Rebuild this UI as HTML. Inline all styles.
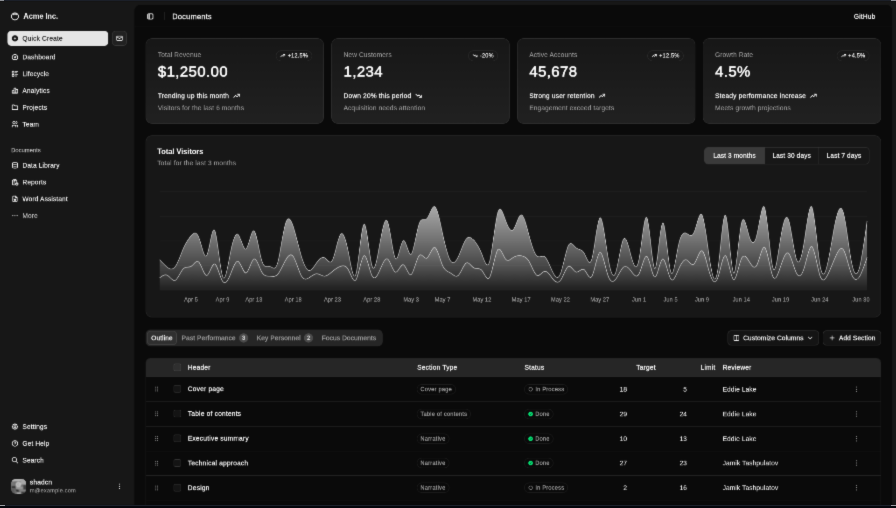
<!DOCTYPE html>
<html><head><meta charset="utf-8"><title>Dashboard</title><style>
*{box-sizing:border-box;margin:0;padding:0}
html,body{width:896px;height:508px;overflow:hidden;background:#171717;}
body{font-family:"Liberation Sans",sans-serif;color:#fafafa;-webkit-text-stroke:0.12px currentColor;position:relative;-webkit-font-smoothing:antialiased}
#root{position:absolute;left:0;top:0.6px;width:1920px;height:1080px;transform:scale(0.466667);transform-origin:0 0;will-change:transform;font-size:14px;line-height:20px;background:#171717}
.abs{position:absolute}
.ic{display:block;flex:none}
.row{display:flex;align-items:center}
.mi{position:absolute;left:16px;width:256px;height:32px;display:flex;align-items:center;gap:8px;padding:0 8px;font-size:14px;white-space:nowrap;letter-spacing:0.3px;-webkit-text-stroke:0.25px currentColor}
.muted{color:#a1a1a1;letter-spacing:0.28px}
.card{position:absolute;background:#171717;border:1px solid rgba(255,255,255,0.10);border-radius:14px;box-shadow:0 1px 2px rgba(0,0,0,.05)}
.badge{position:absolute;display:flex;align-items:center;gap:4px;height:22px;padding:0 8px;border:1px solid rgba(255,255,255,0.10);border-radius:11.5px;font-size:12px;-webkit-text-stroke:0.3px currentColor;letter-spacing:0.42px;white-space:nowrap;line-height:16px}
.t{position:absolute;white-space:nowrap}
.b{-webkit-text-stroke:0.45px currentColor;letter-spacing:0.45px}
.sb{font-weight:700}
.tr{position:absolute;left:0;width:100%;border-bottom:1px solid rgba(255,255,255,0.10)}
.pill{position:absolute;display:flex;align-items:center;gap:4px;height:22px;padding:0 7px;border:1px solid rgba(255,255,255,0.10);border-radius:11px;font-size:12px;-webkit-text-stroke:0.4px currentColor;letter-spacing:0.55px;color:#a1a1a1;white-space:nowrap;line-height:16px}
.cb{position:absolute;width:16px;height:16px;border:1px solid rgba(255,255,255,0.15);border-radius:4px;background:rgba(255,255,255,0.045)}
</style></head>
<body><svg width="0" height="0" style="position:absolute"><defs><filter id="soft" x="0" y="0" width="100%" height="100%" color-interpolation-filters="sRGB"><feConvolveMatrix order="3" kernelMatrix="0.0114 0.084 0.0114 0.084 0.618 0.084 0.0114 0.084 0.0114" divisor="1" edgeMode="duplicate" preserveAlpha="true"/></filter></defs></svg>
<div id="wrap" style="position:absolute;left:0;top:0;width:896px;height:508px;overflow:hidden;filter:url(#soft)"><div id="root">
<div class="mi sb" style="top:16.5px;font-size:16px;padding:0 6px;letter-spacing:-0.15px;-webkit-text-stroke:0"><svg class="ic" style="width:20px;height:20px;" viewBox="0 0 24 24" fill="none" stroke="currentColor" stroke-width="2.2" stroke-linecap="round" stroke-linejoin="round"><path d="M5.636 5.636a9 9 0 1 0 12.728 12.728a9 9 0 0 0 -12.728 -12.728z"/><path d="M16.243 7.757a6 6 0 0 0 -8.486 0"/></svg><span>Acme Inc.</span></div>
<div class="abs row" style="left:16px;top:64px;width:216px;height:32px;background:#e5e5e5;color:#171717;border-radius:8px;padding:0 8px;gap:8px;white-space:nowrap;letter-spacing:0.4px;-webkit-text-stroke:0.25px currentColor"><svg class="ic" style="width:16px;height:16px;" viewBox="0 0 24 24" fill="none" stroke="currentColor" stroke-width="2" stroke-linecap="round" stroke-linejoin="round"><path stroke="none" fill="currentColor" d="M4.929 4.929a10 10 0 1 1 14.141 14.141a10 10 0 0 1 -14.14 -14.14zm8.071 4.071a1 1 0 1 0 -2 0v2h-2a1 1 0 1 0 0 2h2v2a1 1 0 1 0 2 0v-2h2a1 1 0 1 0 0 -2h-2v-2z"/></svg><span>Quick Create</span></div>
<div class="abs row" style="left:240px;top:64px;width:32px;height:32px;border:1px solid rgba(255,255,255,0.15);background:rgba(255,255,255,0.045);border-radius:8px;justify-content:center"><svg class="ic" style="width:16px;height:16px;" viewBox="0 0 24 24" fill="none" stroke="currentColor" stroke-width="2" stroke-linecap="round" stroke-linejoin="round"><path d="M3 7a2 2 0 0 1 2 -2h14a2 2 0 0 1 2 2v10a2 2 0 0 1 -2 2h-14a2 2 0 0 1 -2 -2v-10z"/><path d="M3 7l9 6l9 -6"/></svg></div>
<div class="mi" style="top:104px"><svg class="ic" style="width:16px;height:16px;" viewBox="0 0 24 24" fill="none" stroke="currentColor" stroke-width="2.4" stroke-linecap="round" stroke-linejoin="round"><path d="M12 13m-2 0a2 2 0 1 0 4 0a2 2 0 1 0 -4 0"/><path d="M13.45 11.55l2.05 -2.05"/><path d="M6.4 20a9 9 0 1 1 11.2 0z"/></svg><span>Dashboard</span></div>
<div class="mi" style="top:140px"><svg class="ic" style="width:16px;height:16px;" viewBox="0 0 24 24" fill="none" stroke="currentColor" stroke-width="2.4" stroke-linecap="round" stroke-linejoin="round"><path d="M13 5h8"/><path d="M13 9h5"/><path d="M13 15h8"/><path d="M13 19h5"/><path d="M3 5a1 1 0 0 1 1 -1h4a1 1 0 0 1 1 1v4a1 1 0 0 1 -1 1h-4a1 1 0 0 1 -1 -1z"/><path d="M3 15a1 1 0 0 1 1 -1h4a1 1 0 0 1 1 1v4a1 1 0 0 1 -1 1h-4a1 1 0 0 1 -1 -1z"/></svg><span>Lifecycle</span></div>
<div class="mi" style="top:176px"><svg class="ic" style="width:16px;height:16px;" viewBox="0 0 24 24" fill="none" stroke="currentColor" stroke-width="2.4" stroke-linecap="round" stroke-linejoin="round"><path d="M3 13a1 1 0 0 1 1 -1h4a1 1 0 0 1 1 1v6a1 1 0 0 1 -1 1h-4a1 1 0 0 1 -1 -1z"/><path d="M15 9a1 1 0 0 1 1 -1h4a1 1 0 0 1 1 1v10a1 1 0 0 1 -1 1h-4a1 1 0 0 1 -1 -1z"/><path d="M9 5a1 1 0 0 1 1 -1h4a1 1 0 0 1 1 1v14a1 1 0 0 1 -1 1h-4a1 1 0 0 1 -1 -1z"/><path d="M4 20h14"/></svg><span>Analytics</span></div>
<div class="mi" style="top:212px"><svg class="ic" style="width:16px;height:16px;" viewBox="0 0 24 24" fill="none" stroke="currentColor" stroke-width="2.4" stroke-linecap="round" stroke-linejoin="round"><path d="M5 4h4l3 3h7a2 2 0 0 1 2 2v8a2 2 0 0 1 -2 2h-14a2 2 0 0 1 -2 -2v-11a2 2 0 0 1 2 -2"/></svg><span>Projects</span></div>
<div class="mi" style="top:248px"><svg class="ic" style="width:16px;height:16px;" viewBox="0 0 24 24" fill="none" stroke="currentColor" stroke-width="2.4" stroke-linecap="round" stroke-linejoin="round"><path d="M5 7a4 4 0 1 0 8 0a4 4 0 1 0 -8 0"/><path d="M3 21v-2a4 4 0 0 1 4 -4h4a4 4 0 0 1 4 4v2"/><path d="M16 3.13a4 4 0 0 1 0 7.75"/><path d="M21 21v-2a4 4 0 0 0 -3 -3.85"/></svg><span>Team</span></div>
<div class="t" style="left:24px;top:304px;height:32px;line-height:32px;font-size:12px;-webkit-text-stroke:0.25px currentColor;letter-spacing:0.3px;color:rgba(250,250,250,.7)">Documents</div>
<div class="mi" style="top:336px"><svg class="ic" style="width:16px;height:16px;" viewBox="0 0 24 24" fill="none" stroke="currentColor" stroke-width="2.4" stroke-linecap="round" stroke-linejoin="round"><path d="M4 6a8 3 0 1 0 16 0a8 3 0 1 0 -16 0"/><path d="M4 6v6a8 3 0 0 0 16 0v-6"/><path d="M4 12v6a8 3 0 0 0 16 0v-6"/></svg><span>Data Library</span></div>
<div class="mi" style="top:372px"><svg class="ic" style="width:16px;height:16px;" viewBox="0 0 24 24" fill="none" stroke="currentColor" stroke-width="2.4" stroke-linecap="round" stroke-linejoin="round"><path d="M8 5h-2a2 2 0 0 0 -2 2v12a2 2 0 0 0 2 2h5.697"/><path d="M18 14v4h4"/><path d="M18 11v-4a2 2 0 0 0 -2 -2h-2"/><path d="M8 5a2 2 0 0 1 2 -2h2a2 2 0 0 1 2 2v0a2 2 0 0 1 -2 2h-2a2 2 0 0 1 -2 -2z"/><path d="M14 18a4 4 0 1 0 8 0a4 4 0 1 0 -8 0"/><path d="M8 11h4"/><path d="M8 15h3"/></svg><span>Reports</span></div>
<div class="mi" style="top:408px"><svg class="ic" style="width:16px;height:16px;" viewBox="0 0 24 24" fill="none" stroke="currentColor" stroke-width="2.4" stroke-linecap="round" stroke-linejoin="round"><path d="M14 3v4a1 1 0 0 0 1 1h4"/><path d="M17 21h-10a2 2 0 0 1 -2 -2v-14a2 2 0 0 1 2 -2h7l5 5v11a2 2 0 0 1 -2 2z"/><path d="M9 12l1.333 5l1.667 -4l1.667 4l1.333 -5"/></svg><span>Word Assistant</span></div>
<div class="mi" style="top:444px;color:rgba(250,250,250,.7)"><svg class="ic" style="width:16px;height:16px;color:rgba(250,250,250,.7)" viewBox="0 0 24 24" fill="none" stroke="currentColor" stroke-width="2" stroke-linecap="round" stroke-linejoin="round"><path d="M4 12a1 1 0 1 0 2 0a1 1 0 1 0 -2 0"/><path d="M11 12a1 1 0 1 0 2 0a1 1 0 1 0 -2 0"/><path d="M18 12a1 1 0 1 0 2 0a1 1 0 1 0 -2 0"/></svg><span>More</span></div>
<div class="mi" style="top:896px"><svg class="ic" style="width:16px;height:16px;" viewBox="0 0 24 24" fill="none" stroke="currentColor" stroke-width="2.4" stroke-linecap="round" stroke-linejoin="round"><path d="M10.325 4.317c.426 -1.756 2.924 -1.756 3.35 0a1.724 1.724 0 0 0 2.573 1.066c1.543 -.94 3.31 .826 2.37 2.37a1.724 1.724 0 0 0 1.065 2.572c1.756 .426 1.756 2.924 0 3.35a1.724 1.724 0 0 0 -1.066 2.573c.94 1.543 -.826 3.31 -2.37 2.37a1.724 1.724 0 0 0 -2.572 1.065c-.426 1.756 -2.924 1.756 -3.35 0a1.724 1.724 0 0 0 -2.573 -1.066c-1.543 .94 -3.31 -.826 -2.37 -2.37a1.724 1.724 0 0 0 -1.065 -2.572c-1.756 -.426 -1.756 -2.924 0 -3.35a1.724 1.724 0 0 0 1.066 -2.573c-.94 -1.543 .826 -3.31 2.37 -2.37c1 .608 2.296 .07 2.572 -1.065z"/><path d="M9 12a3 3 0 1 0 6 0a3 3 0 0 0 -6 0"/></svg><span>Settings</span></div>
<div class="mi" style="top:932px"><svg class="ic" style="width:16px;height:16px;" viewBox="0 0 24 24" fill="none" stroke="currentColor" stroke-width="2.4" stroke-linecap="round" stroke-linejoin="round"><path d="M3 12a9 9 0 1 0 18 0a9 9 0 1 0 -18 0"/><path d="M12 17l0 .01"/><path d="M12 13.5a1.5 1.5 0 0 1 1 -1.5a2.6 2.6 0 1 0 -3 -4"/></svg><span>Get Help</span></div>
<div class="mi" style="top:968px"><svg class="ic" style="width:16px;height:16px;" viewBox="0 0 24 24" fill="none" stroke="currentColor" stroke-width="2.4" stroke-linecap="round" stroke-linejoin="round"><path d="M3 10a7 7 0 1 0 14 0a7 7 0 1 0 -14 0"/><path d="M21 21l-6 -6"/></svg><span>Search</span></div>
<div class="abs row" style="left:16px;top:1016px;width:256px;height:48px;padding:0 8px;gap:8px">
<svg class="ic" style="width:32px;height:32px;border-radius:9px" viewBox="0 0 32 32"><defs><filter id="bl" x="-20%" y="-20%" width="140%" height="140%"><feGaussianBlur stdDeviation="1.1"/></filter><clipPath id="avc"><rect width="32" height="32" rx="9"/></clipPath></defs><g clip-path="url(#avc)"><rect width="32" height="32" fill="#6f6f6f"/><g filter="url(#bl)"><rect x="-2" y="-2" width="36" height="7" fill="#b4b4b4"/><rect x="20" y="0" width="14" height="12" fill="#a8a8a8"/><rect x="-2" y="5" width="8" height="10" fill="#767676"/><circle cx="15.5" cy="12" r="6" fill="#c4c4c4"/><circle cx="15.5" cy="12" r="2.6" fill="#8a8a8a"/><ellipse cx="16" cy="12" rx="1.6" ry="1.2" fill="#d8d8d8"/><rect x="1" y="15.5" width="8" height="4" fill="#2c2c2c"/><path d="M7 17 L12 19 L20 31 L13 31 Z" fill="#303030"/><rect x="-2" y="21" width="9" height="11" fill="#5c5c5c"/><rect x="26" y="13" width="8" height="11" fill="#3c3c3c"/><rect x="10" y="17" width="15" height="5" fill="#9c9c9c"/><rect x="18" y="23" width="13" height="4" fill="#858585"/><rect x="20" y="27.5" width="14" height="6" fill="#3a3a3a"/><rect x="12" y="28.5" width="9" height="5" fill="#a8a8a8"/></g></g></svg>
<div style="flex:1;line-height:17.5px"><div class="b" style="font-size:14px">shadcn</div><div style="font-size:12px;color:#a1a1a1;line-height:16px;letter-spacing:0.4px">m@example.com</div></div>
<svg class="ic" style="width:16px;height:16px;" viewBox="0 0 24 24" fill="none" stroke="currentColor" stroke-width="2" stroke-linecap="round" stroke-linejoin="round"><circle cx="12" cy="5" r="1.7" fill="currentColor" stroke="none"/><circle cx="12" cy="12" r="1.7" fill="currentColor" stroke="none"/><circle cx="12" cy="19" r="1.7" fill="currentColor" stroke="none"/></svg></div>
<div class="abs" style="left:288px;top:8px;width:1624px;height:1100px;background:#0a0a0a;border-radius:14px;box-shadow:0 1px 3px rgba(0,0,0,.1)"></div>
<div class="abs" style="left:288px;top:55px;width:1624px;height:1px;background:rgba(255,255,255,0.10)"></div>
<div class="abs" style="left:314px;top:25px"><svg class="ic" style="width:16px;height:16px;" viewBox="0 0 24 24" fill="none" stroke="currentColor" stroke-width="2" stroke-linecap="round" stroke-linejoin="round"><rect width="17" height="17" x="3.5" y="3.5" rx="3.5" stroke-width="2.6"/><path d="M4.5 5h5v14h-5z" fill="currentColor" stroke="none" opacity=".5"/><path d="M10 4v16" stroke-width="1.6"/></svg></div>
<div class="abs" style="left:352px;top:24px;width:1px;height:16px;background:rgba(255,255,255,0.10)"></div>
<div class="t b" style="left:369px;top:21.5px;font-size:16px;line-height:24px">Documents</div>
<div class="t b" style="right:44px;top:23px;font-size:14px">GitHub</div>
<div class="card" style="left:312px;top:80px;width:382px;height:183px;background:linear-gradient(to top,#212121,#171717)"><div class="t muted" style="left:25.2px;top:24px">Total Revenue</div><div class="t" style="left:25.2px;top:52.3px;font-size:32px;line-height:36px;letter-spacing:0.9px;-webkit-text-stroke:1.15px currentColor">$1,250.00</div><div class="badge" style="right:24px;top:25.2px;height:22.6px"><svg class="ic" style="width:12px;height:12px;" viewBox="0 0 24 24" fill="none" stroke="currentColor" stroke-width="2.5" stroke-linecap="round" stroke-linejoin="round"><path d="M3 17l6 -6l4 4l8 -8"/><path d="M14 7l7 0l0 7"/></svg><span>+12.5%</span></div><div class="t b row" style="left:25.2px;top:112px;gap:8px"><span>Trending up this month</span><svg class="ic" style="width:16px;height:16px;" viewBox="0 0 24 24" fill="none" stroke="currentColor" stroke-width="2.4" stroke-linecap="round" stroke-linejoin="round"><path d="M3 17l6 -6l4 4l8 -8"/><path d="M14 7l7 0l0 7"/></svg></div><div class="t muted" style="left:25.2px;top:138.2px">Visitors for the last 6 months</div></div>
<div class="card" style="left:710px;top:80px;width:382px;height:183px;background:linear-gradient(to top,#212121,#171717)"><div class="t muted" style="left:25.2px;top:24px">New Customers</div><div class="t" style="left:25.2px;top:52.3px;font-size:32px;line-height:36px;letter-spacing:0.9px;-webkit-text-stroke:1.15px currentColor">1,234</div><div class="badge" style="right:24px;top:25.2px;height:22.6px"><svg class="ic" style="width:12px;height:12px;" viewBox="0 0 24 24" fill="none" stroke="currentColor" stroke-width="2.5" stroke-linecap="round" stroke-linejoin="round"><path d="M3 7l6 6l4 -4l8 8"/><path d="M21 10l0 7l-7 0"/></svg><span>-20%</span></div><div class="t b row" style="left:25.2px;top:112px;gap:8px"><span>Down 20% this period</span><svg class="ic" style="width:16px;height:16px;" viewBox="0 0 24 24" fill="none" stroke="currentColor" stroke-width="2.4" stroke-linecap="round" stroke-linejoin="round"><path d="M3 7l6 6l4 -4l8 8"/><path d="M21 10l0 7l-7 0"/></svg></div><div class="t muted" style="left:25.2px;top:138.2px">Acquisition needs attention</div></div>
<div class="card" style="left:1108px;top:80px;width:382px;height:183px;background:linear-gradient(to top,#212121,#171717)"><div class="t muted" style="left:25.2px;top:24px">Active Accounts</div><div class="t" style="left:25.2px;top:52.3px;font-size:32px;line-height:36px;letter-spacing:0.9px;-webkit-text-stroke:1.15px currentColor">45,678</div><div class="badge" style="right:24px;top:25.2px;height:22.6px"><svg class="ic" style="width:12px;height:12px;" viewBox="0 0 24 24" fill="none" stroke="currentColor" stroke-width="2.5" stroke-linecap="round" stroke-linejoin="round"><path d="M3 17l6 -6l4 4l8 -8"/><path d="M14 7l7 0l0 7"/></svg><span>+12.5%</span></div><div class="t b row" style="left:25.2px;top:112px;gap:8px"><span>Strong user retention</span><svg class="ic" style="width:16px;height:16px;" viewBox="0 0 24 24" fill="none" stroke="currentColor" stroke-width="2.4" stroke-linecap="round" stroke-linejoin="round"><path d="M3 17l6 -6l4 4l8 -8"/><path d="M14 7l7 0l0 7"/></svg></div><div class="t muted" style="left:25.2px;top:138.2px">Engagement exceed targets</div></div>
<div class="card" style="left:1506px;top:80px;width:382px;height:183px;background:linear-gradient(to top,#212121,#171717)"><div class="t muted" style="left:25.2px;top:24px">Growth Rate</div><div class="t" style="left:25.2px;top:52.3px;font-size:32px;line-height:36px;letter-spacing:0.9px;-webkit-text-stroke:1.15px currentColor">4.5%</div><div class="badge" style="right:24px;top:25.2px;height:22.6px"><svg class="ic" style="width:12px;height:12px;" viewBox="0 0 24 24" fill="none" stroke="currentColor" stroke-width="2.5" stroke-linecap="round" stroke-linejoin="round"><path d="M3 17l6 -6l4 4l8 -8"/><path d="M14 7l7 0l0 7"/></svg><span>+4.5%</span></div><div class="t b row" style="left:25.2px;top:112px;gap:8px"><span>Steady performance increase</span><svg class="ic" style="width:16px;height:16px;" viewBox="0 0 24 24" fill="none" stroke="currentColor" stroke-width="2.4" stroke-linecap="round" stroke-linejoin="round"><path d="M3 17l6 -6l4 4l8 -8"/><path d="M14 7l7 0l0 7"/></svg></div><div class="t muted" style="left:25.2px;top:138.2px">Meets growth projections</div></div>
<div class="card" style="left:312px;top:288px;width:1576px;height:390px">
<div class="t sb" style="left:24px;top:25.5px;font-size:16px;line-height:16px;letter-spacing:-0.1px">Total Visitors</div>
<div class="t muted" style="left:24px;top:48px;letter-spacing:0.32px">Total for the last 3 months</div>
<div class="abs row" style="right:24px;top:23.5px;height:37px;border:1px solid rgba(255,255,255,0.15);border-radius:8px;-webkit-text-stroke:0.45px currentColor;letter-spacing:0.25px;white-space:nowrap;overflow:hidden"><div class="row" style="height:100%;width:128px;justify-content:center;background:#3a3a3a">Last 3 months</div><div class="row" style="height:100%;width:116px;justify-content:center;border-left:1px solid rgba(255,255,255,0.15)">Last 30 days</div><div class="row" style="height:100%;width:108px;justify-content:center;border-left:1px solid rgba(255,255,255,0.15)">Last 7 days</div></div>
<svg class="abs" style="left:0;top:0;overflow:visible" width="1574" height="388" viewBox="0 0 1574 388"><defs><linearGradient id="gd" gradientUnits="userSpaceOnUse" x1="0" y1="151.6" x2="0" y2="330.6"><stop offset="5%" stop-color="#e5e5e5" stop-opacity="1"/><stop offset="95%" stop-color="#e5e5e5" stop-opacity="0.1"/></linearGradient><linearGradient id="gm" gradientUnits="userSpaceOnUse" x1="0" y1="237.4" x2="0" y2="330.6"><stop offset="5%" stop-color="#e5e5e5" stop-opacity="0.8"/><stop offset="95%" stop-color="#e5e5e5" stop-opacity="0.1"/></linearGradient></defs><line x1="29" x2="1545" y1="330.6" y2="330.6" stroke="rgba(255,255,255,0.05)" stroke-width="1"/><line x1="29" x2="1545" y1="277.85" y2="277.85" stroke="rgba(255,255,255,0.05)" stroke-width="1"/><line x1="29" x2="1545" y1="225.10000000000002" y2="225.10000000000002" stroke="rgba(255,255,255,0.05)" stroke-width="1"/><line x1="29" x2="1545" y1="172.35" y2="172.35" stroke="rgba(255,255,255,0.05)" stroke-width="1"/><line x1="29" x2="1545" y1="119.6" y2="119.6" stroke="rgba(255,255,255,0.05)" stroke-width="1"/><path d="M29.0,304.2C34.6,300.1,40.2,295.9,45.8,299.0C51.5,302.0,57.1,312.3,62.7,309.5C68.3,306.7,73.9,290.8,79.5,284.9C85.1,279.0,90.8,283.1,96.4,279.6C102.0,276.1,107.6,264.9,113.2,270.8C118.8,276.8,124.5,299.8,130.1,299.0C135.7,298.1,141.3,273.2,146.9,274.3C152.5,275.4,158.1,302.5,163.8,311.3C169.4,320.1,175.0,310.7,180.6,297.2C186.2,283.7,191.8,266.2,197.4,269.1C203.1,271.9,208.7,295.1,214.3,293.7C219.9,292.3,225.5,266.3,231.1,263.8C236.7,261.2,242.4,282.1,248.0,291.9C253.6,301.7,259.2,300.4,264.8,300.7C270.4,301.1,276.1,303.1,281.7,297.2C287.3,291.3,292.9,277.5,298.5,267.3C304.1,257.1,309.7,250.6,315.4,258.5C321.0,266.4,326.6,288.6,332.2,299.0C337.8,309.3,343.4,307.7,349.0,304.2C354.7,300.8,360.3,295.4,365.9,295.4C371.5,295.5,377.1,300.9,382.7,300.7C388.3,300.6,394.0,294.9,399.6,290.2C405.2,285.5,410.8,281.8,416.4,279.6C422.0,277.4,427.7,276.8,433.3,286.6C438.9,296.5,444.5,317.0,450.1,307.7C455.7,298.5,461.3,259.6,467.0,256.8C472.6,253.9,478.2,287.2,483.8,299.0C489.4,310.7,495.0,301.0,500.6,288.4C506.3,275.8,511.9,260.2,517.5,263.8C523.1,267.4,528.7,290.2,534.3,291.9C539.9,293.7,545.6,274.3,551.2,276.1C556.8,277.8,562.4,300.7,568.0,297.2C573.6,293.7,579.3,263.9,584.9,256.8C590.5,249.6,596.1,265.0,601.7,262.0C607.3,259.0,612.9,237.5,618.6,239.2C624.2,240.8,629.8,265.5,635.4,277.9C641.0,290.2,646.6,290.2,652.2,293.7C657.9,297.2,663.5,304.2,669.1,299.0C674.7,293.7,680.3,276.0,685.9,272.6C691.5,269.2,697.2,280.0,702.8,283.1C708.4,286.3,714.0,281.7,719.6,288.4C725.2,295.1,730.9,312.9,736.5,302.5C742.1,292.0,747.7,253.3,753.3,244.4C758.9,235.6,764.5,256.7,770.2,263.8C775.8,270.9,781.4,264.0,787.0,260.3C792.6,256.6,798.2,256.0,803.8,256.8C809.5,257.5,815.1,259.5,820.7,269.1C826.3,278.7,831.9,295.9,837.5,299.0C843.1,302.0,848.8,290.9,854.4,290.2C860.0,289.4,865.6,299.1,871.2,306.0C876.8,312.9,882.5,317.1,888.1,309.5C893.7,301.9,899.3,282.5,904.9,279.6C910.5,276.8,916.1,290.5,921.8,291.9C927.4,293.3,933.0,282.4,938.6,286.6C944.2,290.9,949.8,310.3,955.4,300.7C961.1,291.1,966.7,252.4,972.3,249.7C977.9,247.0,983.5,280.2,989.1,297.2C994.7,314.1,1000.4,314.8,1006.0,307.7C1011.6,300.7,1017.2,285.8,1022.8,281.4C1028.4,276.9,1034.1,282.8,1039.7,290.2C1045.3,297.5,1050.9,306.3,1056.5,295.4C1062.1,284.6,1067.7,254.2,1073.4,258.5C1079.0,262.8,1084.6,301.8,1090.2,302.5C1095.8,303.1,1101.4,265.4,1107.0,263.8C1112.7,262.2,1118.3,296.7,1123.9,306.0C1129.5,315.3,1135.1,299.5,1140.7,286.6C1146.3,273.8,1152.0,264.0,1157.6,265.5C1163.2,267.1,1168.8,280.1,1174.4,274.3C1180.0,268.5,1185.7,243.9,1191.3,246.2C1196.9,248.5,1202.5,277.8,1208.1,295.4C1213.7,313.1,1219.3,319.2,1225.0,304.2C1230.6,289.2,1236.2,253.1,1241.8,256.8C1247.4,260.4,1253.0,303.6,1258.6,307.7C1264.3,311.8,1269.9,276.8,1275.5,263.8C1281.1,250.8,1286.7,259.9,1292.3,269.1C1297.9,278.2,1303.6,287.3,1309.2,276.1C1314.8,264.9,1320.4,233.4,1326.0,239.2C1331.6,244.9,1337.3,287.8,1342.9,300.7C1348.5,313.6,1354.1,296.4,1359.7,279.6C1365.3,262.9,1370.9,246.6,1376.6,251.5C1382.2,256.4,1387.8,282.5,1393.4,293.7C1399.0,304.8,1404.6,301.1,1410.2,283.1C1415.9,265.2,1421.5,233.1,1427.1,237.4C1432.7,241.7,1438.3,282.3,1443.9,299.0C1449.5,315.6,1455.2,308.3,1460.8,297.2C1466.4,286.1,1472.0,271.1,1477.6,258.5C1483.2,245.9,1488.9,235.6,1494.5,244.4C1500.1,253.2,1505.7,281.1,1511.3,295.4C1516.9,309.8,1522.5,310.6,1528.2,302.5C1533.8,294.4,1539.4,277.3,1545.0,260.3L1545.0,330.6L29.0,330.6Z" fill="url(#gm)" fill-opacity="0.6"/><path d="M29.0,304.2C34.6,300.1,40.2,295.9,45.8,299.0C51.5,302.0,57.1,312.3,62.7,309.5C68.3,306.7,73.9,290.8,79.5,284.9C85.1,279.0,90.8,283.1,96.4,279.6C102.0,276.1,107.6,264.9,113.2,270.8C118.8,276.8,124.5,299.8,130.1,299.0C135.7,298.1,141.3,273.2,146.9,274.3C152.5,275.4,158.1,302.5,163.8,311.3C169.4,320.1,175.0,310.7,180.6,297.2C186.2,283.7,191.8,266.2,197.4,269.1C203.1,271.9,208.7,295.1,214.3,293.7C219.9,292.3,225.5,266.3,231.1,263.8C236.7,261.2,242.4,282.1,248.0,291.9C253.6,301.7,259.2,300.4,264.8,300.7C270.4,301.1,276.1,303.1,281.7,297.2C287.3,291.3,292.9,277.5,298.5,267.3C304.1,257.1,309.7,250.6,315.4,258.5C321.0,266.4,326.6,288.6,332.2,299.0C337.8,309.3,343.4,307.7,349.0,304.2C354.7,300.8,360.3,295.4,365.9,295.4C371.5,295.5,377.1,300.9,382.7,300.7C388.3,300.6,394.0,294.9,399.6,290.2C405.2,285.5,410.8,281.8,416.4,279.6C422.0,277.4,427.7,276.8,433.3,286.6C438.9,296.5,444.5,317.0,450.1,307.7C455.7,298.5,461.3,259.6,467.0,256.8C472.6,253.9,478.2,287.2,483.8,299.0C489.4,310.7,495.0,301.0,500.6,288.4C506.3,275.8,511.9,260.2,517.5,263.8C523.1,267.4,528.7,290.2,534.3,291.9C539.9,293.7,545.6,274.3,551.2,276.1C556.8,277.8,562.4,300.7,568.0,297.2C573.6,293.7,579.3,263.9,584.9,256.8C590.5,249.6,596.1,265.0,601.7,262.0C607.3,259.0,612.9,237.5,618.6,239.2C624.2,240.8,629.8,265.5,635.4,277.9C641.0,290.2,646.6,290.2,652.2,293.7C657.9,297.2,663.5,304.2,669.1,299.0C674.7,293.7,680.3,276.0,685.9,272.6C691.5,269.2,697.2,280.0,702.8,283.1C708.4,286.3,714.0,281.7,719.6,288.4C725.2,295.1,730.9,312.9,736.5,302.5C742.1,292.0,747.7,253.3,753.3,244.4C758.9,235.6,764.5,256.7,770.2,263.8C775.8,270.9,781.4,264.0,787.0,260.3C792.6,256.6,798.2,256.0,803.8,256.8C809.5,257.5,815.1,259.5,820.7,269.1C826.3,278.7,831.9,295.9,837.5,299.0C843.1,302.0,848.8,290.9,854.4,290.2C860.0,289.4,865.6,299.1,871.2,306.0C876.8,312.9,882.5,317.1,888.1,309.5C893.7,301.9,899.3,282.5,904.9,279.6C910.5,276.8,916.1,290.5,921.8,291.9C927.4,293.3,933.0,282.4,938.6,286.6C944.2,290.9,949.8,310.3,955.4,300.7C961.1,291.1,966.7,252.4,972.3,249.7C977.9,247.0,983.5,280.2,989.1,297.2C994.7,314.1,1000.4,314.8,1006.0,307.7C1011.6,300.7,1017.2,285.8,1022.8,281.4C1028.4,276.9,1034.1,282.8,1039.7,290.2C1045.3,297.5,1050.9,306.3,1056.5,295.4C1062.1,284.6,1067.7,254.2,1073.4,258.5C1079.0,262.8,1084.6,301.8,1090.2,302.5C1095.8,303.1,1101.4,265.4,1107.0,263.8C1112.7,262.2,1118.3,296.7,1123.9,306.0C1129.5,315.3,1135.1,299.5,1140.7,286.6C1146.3,273.8,1152.0,264.0,1157.6,265.5C1163.2,267.1,1168.8,280.1,1174.4,274.3C1180.0,268.5,1185.7,243.9,1191.3,246.2C1196.9,248.5,1202.5,277.8,1208.1,295.4C1213.7,313.1,1219.3,319.2,1225.0,304.2C1230.6,289.2,1236.2,253.1,1241.8,256.8C1247.4,260.4,1253.0,303.6,1258.6,307.7C1264.3,311.8,1269.9,276.8,1275.5,263.8C1281.1,250.8,1286.7,259.9,1292.3,269.1C1297.9,278.2,1303.6,287.3,1309.2,276.1C1314.8,264.9,1320.4,233.4,1326.0,239.2C1331.6,244.9,1337.3,287.8,1342.9,300.7C1348.5,313.6,1354.1,296.4,1359.7,279.6C1365.3,262.9,1370.9,246.6,1376.6,251.5C1382.2,256.4,1387.8,282.5,1393.4,293.7C1399.0,304.8,1404.6,301.1,1410.2,283.1C1415.9,265.2,1421.5,233.1,1427.1,237.4C1432.7,241.7,1438.3,282.3,1443.9,299.0C1449.5,315.6,1455.2,308.3,1460.8,297.2C1466.4,286.1,1472.0,271.1,1477.6,258.5C1483.2,245.9,1488.9,235.6,1494.5,244.4C1500.1,253.2,1505.7,281.1,1511.3,295.4C1516.9,309.8,1522.5,310.6,1528.2,302.5C1533.8,294.4,1539.4,277.3,1545.0,260.3" fill="none" stroke="#d4d4d4" stroke-width="1.25"/><path d="M29.0,265.2C34.6,271.5,40.2,277.8,45.8,281.9C51.5,286.0,57.1,287.8,62.7,280.1C68.3,272.5,73.9,255.3,79.5,242.3C85.1,229.3,90.8,220.5,96.4,214.0C102.0,207.5,107.6,203.3,113.2,217.9C118.8,232.5,124.5,265.8,130.1,255.9C135.7,246.0,141.3,192.9,146.9,202.4C152.5,211.9,158.1,284.0,163.8,300.9C169.4,317.7,175.0,279.3,180.6,251.3C186.2,223.3,191.8,205.8,197.4,211.6C203.1,217.4,208.7,246.5,214.3,242.3C219.9,238.2,225.5,200.7,231.1,203.6C236.7,206.6,242.4,249.9,248.0,267.8C253.6,285.7,259.2,278.3,264.8,279.6C270.4,281.0,276.1,291.1,281.7,272.9C287.3,254.7,292.9,208.2,298.5,188.9C304.1,169.6,309.7,177.6,315.4,194.5C321.0,211.4,326.6,237.2,332.2,256.2C337.8,275.3,343.4,287.6,349.0,288.6C354.7,289.6,360.3,279.3,365.9,271.3C371.5,263.4,377.1,257.9,382.7,261.3C388.3,264.7,394.0,277.1,399.6,265.9C405.2,254.7,410.8,220.1,416.4,211.6C422.0,203.1,427.7,220.7,433.3,248.8C438.9,276.9,444.5,315.4,450.1,294.6C455.7,273.7,461.3,193.4,467.0,189.4C472.6,185.4,478.2,257.7,483.8,277.5C489.4,297.3,495.0,264.7,500.6,233.0C506.3,201.3,511.9,170.4,517.5,184.0C523.1,197.5,528.7,255.3,534.3,262.9C539.9,270.5,545.6,227.8,551.2,224.6C556.8,221.4,562.4,257.7,568.0,253.8C573.6,249.8,579.3,205.7,584.9,189.1C590.5,172.5,596.1,183.4,601.7,177.4C607.3,171.5,612.9,148.6,618.6,151.6C624.2,154.6,629.8,183.6,635.4,209.6C641.0,235.6,646.6,258.6,652.2,267.5C657.9,276.3,663.5,271.0,669.1,259.0C674.7,247.0,680.3,228.4,685.9,221.1C691.5,213.8,697.2,217.8,702.8,224.2C708.4,230.6,714.0,239.3,719.6,253.8C725.2,268.2,730.9,288.3,736.5,267.8C742.1,247.3,747.7,186.3,753.3,165.7C758.9,145.1,764.5,165.0,770.2,180.6C775.8,196.2,781.4,207.6,787.0,200.8C792.6,194.1,798.2,169.4,803.8,169.0C809.5,168.6,815.1,192.7,820.7,213.7C826.3,234.7,831.9,252.6,837.5,257.6C843.1,262.6,848.8,254.7,854.4,259.0C860.0,263.4,865.6,280.1,871.2,291.6C876.8,303.1,882.5,309.4,888.1,295.3C893.7,281.2,899.3,246.6,904.9,235.3C910.5,224.0,916.1,235.8,921.8,240.2C927.4,244.6,933.0,241.7,938.6,251.3C944.2,260.9,949.8,283.2,955.4,263.3C961.1,243.3,966.7,181.3,972.3,175.9C977.9,170.4,983.5,221.6,989.1,256.2C994.7,290.8,1000.4,308.8,1006.0,294.0C1011.6,279.3,1017.2,231.8,1022.8,221.6C1028.4,211.4,1034.1,238.4,1039.7,258.9C1045.3,279.3,1050.9,293.0,1056.5,264.1C1062.1,235.2,1067.7,163.7,1073.4,175.9C1079.0,188.0,1084.6,283.9,1090.2,284.4C1095.8,284.9,1101.4,190.0,1107.0,186.6C1112.7,183.1,1118.3,271.1,1123.9,290.5C1129.5,310.0,1135.1,260.9,1140.7,234.9C1146.3,209.0,1152.0,206.1,1157.6,208.7C1163.2,211.4,1168.8,219.6,1174.4,206.6C1180.0,193.7,1185.7,159.6,1191.3,169.2C1196.9,178.8,1202.5,232.0,1208.1,268.2C1213.7,304.4,1219.3,323.6,1225.0,288.0C1230.6,252.5,1236.2,162.3,1241.8,170.2C1247.4,178.2,1253.0,284.2,1258.6,293.5C1264.3,302.8,1269.9,215.3,1275.5,188.9C1281.1,162.4,1286.7,196.9,1292.3,215.1C1297.9,233.2,1303.6,235.0,1309.2,210.9C1314.8,186.8,1320.4,136.8,1326.0,155.6C1331.6,174.5,1337.3,262.0,1342.9,281.9C1348.5,301.8,1354.1,254.0,1359.7,219.6C1365.3,185.3,1370.9,164.3,1376.6,179.7C1382.2,195.2,1387.8,247.1,1393.4,264.0C1399.0,280.8,1404.6,262.5,1410.2,227.4C1415.9,192.3,1421.5,140.4,1427.1,153.0C1432.7,165.6,1438.3,242.7,1443.9,275.7C1449.5,308.7,1455.2,297.6,1460.8,272.4C1466.4,247.2,1472.0,207.8,1477.6,182.2C1483.2,156.6,1488.9,144.8,1494.5,165.7C1500.1,186.5,1505.7,240.1,1511.3,269.2C1516.9,298.3,1522.5,303.0,1528.2,284.4C1533.8,265.7,1539.4,223.8,1545.0,181.8L1545.0,260.3C1539.4,277.3,1533.8,294.4,1528.2,302.5C1522.5,310.6,1516.9,309.8,1511.3,295.4C1505.7,281.1,1500.1,253.2,1494.5,244.4C1488.9,235.6,1483.2,245.9,1477.6,258.5C1472.0,271.1,1466.4,286.1,1460.8,297.2C1455.2,308.3,1449.5,315.6,1443.9,299.0C1438.3,282.3,1432.7,241.7,1427.1,237.4C1421.5,233.1,1415.9,265.2,1410.2,283.1C1404.6,301.1,1399.0,304.8,1393.4,293.7C1387.8,282.5,1382.2,256.4,1376.6,251.5C1370.9,246.6,1365.3,262.9,1359.7,279.6C1354.1,296.4,1348.5,313.6,1342.9,300.7C1337.3,287.8,1331.6,244.9,1326.0,239.2C1320.4,233.4,1314.8,264.9,1309.2,276.1C1303.6,287.3,1297.9,278.2,1292.3,269.1C1286.7,259.9,1281.1,250.8,1275.5,263.8C1269.9,276.8,1264.3,311.8,1258.6,307.7C1253.0,303.6,1247.4,260.4,1241.8,256.8C1236.2,253.1,1230.6,289.2,1225.0,304.2C1219.3,319.2,1213.7,313.1,1208.1,295.4C1202.5,277.8,1196.9,248.5,1191.3,246.2C1185.7,243.9,1180.0,268.5,1174.4,274.3C1168.8,280.1,1163.2,267.1,1157.6,265.5C1152.0,264.0,1146.3,273.8,1140.7,286.6C1135.1,299.5,1129.5,315.3,1123.9,306.0C1118.3,296.7,1112.7,262.2,1107.0,263.8C1101.4,265.4,1095.8,303.1,1090.2,302.5C1084.6,301.8,1079.0,262.8,1073.4,258.5C1067.7,254.2,1062.1,284.6,1056.5,295.4C1050.9,306.3,1045.3,297.5,1039.7,290.2C1034.1,282.8,1028.4,276.9,1022.8,281.4C1017.2,285.8,1011.6,300.7,1006.0,307.7C1000.4,314.8,994.7,314.1,989.1,297.2C983.5,280.2,977.9,247.0,972.3,249.7C966.7,252.4,961.1,291.1,955.4,300.7C949.8,310.3,944.2,290.9,938.6,286.6C933.0,282.4,927.4,293.3,921.8,291.9C916.1,290.5,910.5,276.8,904.9,279.6C899.3,282.5,893.7,301.9,888.1,309.5C882.5,317.1,876.8,312.9,871.2,306.0C865.6,299.1,860.0,289.4,854.4,290.2C848.8,290.9,843.1,302.0,837.5,299.0C831.9,295.9,826.3,278.7,820.7,269.1C815.1,259.5,809.5,257.5,803.8,256.8C798.2,256.0,792.6,256.6,787.0,260.3C781.4,264.0,775.8,270.9,770.2,263.8C764.5,256.7,758.9,235.6,753.3,244.4C747.7,253.3,742.1,292.0,736.5,302.5C730.9,312.9,725.2,295.1,719.6,288.4C714.0,281.7,708.4,286.3,702.8,283.1C697.2,280.0,691.5,269.2,685.9,272.6C680.3,276.0,674.7,293.7,669.1,299.0C663.5,304.2,657.9,297.2,652.2,293.7C646.6,290.2,641.0,290.2,635.4,277.9C629.8,265.5,624.2,240.8,618.6,239.2C612.9,237.5,607.3,259.0,601.7,262.0C596.1,265.0,590.5,249.6,584.9,256.8C579.3,263.9,573.6,293.7,568.0,297.2C562.4,300.7,556.8,277.8,551.2,276.1C545.6,274.3,539.9,293.7,534.3,291.9C528.7,290.2,523.1,267.4,517.5,263.8C511.9,260.2,506.3,275.8,500.6,288.4C495.0,301.0,489.4,310.7,483.8,299.0C478.2,287.2,472.6,253.9,467.0,256.8C461.3,259.6,455.7,298.5,450.1,307.7C444.5,317.0,438.9,296.5,433.3,286.6C427.7,276.8,422.0,277.4,416.4,279.6C410.8,281.8,405.2,285.5,399.6,290.2C394.0,294.9,388.3,300.6,382.7,300.7C377.1,300.9,371.5,295.5,365.9,295.4C360.3,295.4,354.7,300.8,349.0,304.2C343.4,307.7,337.8,309.3,332.2,299.0C326.6,288.6,321.0,266.4,315.4,258.5C309.7,250.6,304.1,257.1,298.5,267.3C292.9,277.5,287.3,291.3,281.7,297.2C276.1,303.1,270.4,301.1,264.8,300.7C259.2,300.4,253.6,301.7,248.0,291.9C242.4,282.1,236.7,261.2,231.1,263.8C225.5,266.3,219.9,292.3,214.3,293.7C208.7,295.1,203.1,271.9,197.4,269.1C191.8,266.2,186.2,283.7,180.6,297.2C175.0,310.7,169.4,320.1,163.8,311.3C158.1,302.5,152.5,275.4,146.9,274.3C141.3,273.2,135.7,298.1,130.1,299.0C124.5,299.8,118.8,276.8,113.2,270.8C107.6,264.9,102.0,276.1,96.4,279.6C90.8,283.1,85.1,279.0,79.5,284.9C73.9,290.8,68.3,306.7,62.7,309.5C57.1,312.3,51.5,302.0,45.8,299.0C40.2,295.9,34.6,300.1,29.0,304.2Z" fill="url(#gd)" fill-opacity="0.68"/><path d="M29.0,265.2C34.6,271.5,40.2,277.8,45.8,281.9C51.5,286.0,57.1,287.8,62.7,280.1C68.3,272.5,73.9,255.3,79.5,242.3C85.1,229.3,90.8,220.5,96.4,214.0C102.0,207.5,107.6,203.3,113.2,217.9C118.8,232.5,124.5,265.8,130.1,255.9C135.7,246.0,141.3,192.9,146.9,202.4C152.5,211.9,158.1,284.0,163.8,300.9C169.4,317.7,175.0,279.3,180.6,251.3C186.2,223.3,191.8,205.8,197.4,211.6C203.1,217.4,208.7,246.5,214.3,242.3C219.9,238.2,225.5,200.7,231.1,203.6C236.7,206.6,242.4,249.9,248.0,267.8C253.6,285.7,259.2,278.3,264.8,279.6C270.4,281.0,276.1,291.1,281.7,272.9C287.3,254.7,292.9,208.2,298.5,188.9C304.1,169.6,309.7,177.6,315.4,194.5C321.0,211.4,326.6,237.2,332.2,256.2C337.8,275.3,343.4,287.6,349.0,288.6C354.7,289.6,360.3,279.3,365.9,271.3C371.5,263.4,377.1,257.9,382.7,261.3C388.3,264.7,394.0,277.1,399.6,265.9C405.2,254.7,410.8,220.1,416.4,211.6C422.0,203.1,427.7,220.7,433.3,248.8C438.9,276.9,444.5,315.4,450.1,294.6C455.7,273.7,461.3,193.4,467.0,189.4C472.6,185.4,478.2,257.7,483.8,277.5C489.4,297.3,495.0,264.7,500.6,233.0C506.3,201.3,511.9,170.4,517.5,184.0C523.1,197.5,528.7,255.3,534.3,262.9C539.9,270.5,545.6,227.8,551.2,224.6C556.8,221.4,562.4,257.7,568.0,253.8C573.6,249.8,579.3,205.7,584.9,189.1C590.5,172.5,596.1,183.4,601.7,177.4C607.3,171.5,612.9,148.6,618.6,151.6C624.2,154.6,629.8,183.6,635.4,209.6C641.0,235.6,646.6,258.6,652.2,267.5C657.9,276.3,663.5,271.0,669.1,259.0C674.7,247.0,680.3,228.4,685.9,221.1C691.5,213.8,697.2,217.8,702.8,224.2C708.4,230.6,714.0,239.3,719.6,253.8C725.2,268.2,730.9,288.3,736.5,267.8C742.1,247.3,747.7,186.3,753.3,165.7C758.9,145.1,764.5,165.0,770.2,180.6C775.8,196.2,781.4,207.6,787.0,200.8C792.6,194.1,798.2,169.4,803.8,169.0C809.5,168.6,815.1,192.7,820.7,213.7C826.3,234.7,831.9,252.6,837.5,257.6C843.1,262.6,848.8,254.7,854.4,259.0C860.0,263.4,865.6,280.1,871.2,291.6C876.8,303.1,882.5,309.4,888.1,295.3C893.7,281.2,899.3,246.6,904.9,235.3C910.5,224.0,916.1,235.8,921.8,240.2C927.4,244.6,933.0,241.7,938.6,251.3C944.2,260.9,949.8,283.2,955.4,263.3C961.1,243.3,966.7,181.3,972.3,175.9C977.9,170.4,983.5,221.6,989.1,256.2C994.7,290.8,1000.4,308.8,1006.0,294.0C1011.6,279.3,1017.2,231.8,1022.8,221.6C1028.4,211.4,1034.1,238.4,1039.7,258.9C1045.3,279.3,1050.9,293.0,1056.5,264.1C1062.1,235.2,1067.7,163.7,1073.4,175.9C1079.0,188.0,1084.6,283.9,1090.2,284.4C1095.8,284.9,1101.4,190.0,1107.0,186.6C1112.7,183.1,1118.3,271.1,1123.9,290.5C1129.5,310.0,1135.1,260.9,1140.7,234.9C1146.3,209.0,1152.0,206.1,1157.6,208.7C1163.2,211.4,1168.8,219.6,1174.4,206.6C1180.0,193.7,1185.7,159.6,1191.3,169.2C1196.9,178.8,1202.5,232.0,1208.1,268.2C1213.7,304.4,1219.3,323.6,1225.0,288.0C1230.6,252.5,1236.2,162.3,1241.8,170.2C1247.4,178.2,1253.0,284.2,1258.6,293.5C1264.3,302.8,1269.9,215.3,1275.5,188.9C1281.1,162.4,1286.7,196.9,1292.3,215.1C1297.9,233.2,1303.6,235.0,1309.2,210.9C1314.8,186.8,1320.4,136.8,1326.0,155.6C1331.6,174.5,1337.3,262.0,1342.9,281.9C1348.5,301.8,1354.1,254.0,1359.7,219.6C1365.3,185.3,1370.9,164.3,1376.6,179.7C1382.2,195.2,1387.8,247.1,1393.4,264.0C1399.0,280.8,1404.6,262.5,1410.2,227.4C1415.9,192.3,1421.5,140.4,1427.1,153.0C1432.7,165.6,1438.3,242.7,1443.9,275.7C1449.5,308.7,1455.2,297.6,1460.8,272.4C1466.4,247.2,1472.0,207.8,1477.6,182.2C1483.2,156.6,1488.9,144.8,1494.5,165.7C1500.1,186.5,1505.7,240.1,1511.3,269.2C1516.9,298.3,1522.5,303.0,1528.2,284.4C1533.8,265.7,1539.4,223.8,1545.0,181.8" fill="none" stroke="#cfcfcf" stroke-width="1.2"/><text x="96.4" y="355.1" text-anchor="middle" font-size="12" fill="#a1a1a1" stroke="#a1a1a1" stroke-width="0.25" letter-spacing="0.2">Apr 5</text><text x="163.8" y="355.1" text-anchor="middle" font-size="12" fill="#a1a1a1" stroke="#a1a1a1" stroke-width="0.25" letter-spacing="0.2">Apr 9</text><text x="231.1" y="355.1" text-anchor="middle" font-size="12" fill="#a1a1a1" stroke="#a1a1a1" stroke-width="0.25" letter-spacing="0.2">Apr 13</text><text x="315.4" y="355.1" text-anchor="middle" font-size="12" fill="#a1a1a1" stroke="#a1a1a1" stroke-width="0.25" letter-spacing="0.2">Apr 18</text><text x="399.6" y="355.1" text-anchor="middle" font-size="12" fill="#a1a1a1" stroke="#a1a1a1" stroke-width="0.25" letter-spacing="0.2">Apr 23</text><text x="483.8" y="355.1" text-anchor="middle" font-size="12" fill="#a1a1a1" stroke="#a1a1a1" stroke-width="0.25" letter-spacing="0.2">Apr 28</text><text x="568.0" y="355.1" text-anchor="middle" font-size="12" fill="#a1a1a1" stroke="#a1a1a1" stroke-width="0.25" letter-spacing="0.2">May 3</text><text x="635.4" y="355.1" text-anchor="middle" font-size="12" fill="#a1a1a1" stroke="#a1a1a1" stroke-width="0.25" letter-spacing="0.2">May 7</text><text x="719.6" y="355.1" text-anchor="middle" font-size="12" fill="#a1a1a1" stroke="#a1a1a1" stroke-width="0.25" letter-spacing="0.2">May 12</text><text x="803.8" y="355.1" text-anchor="middle" font-size="12" fill="#a1a1a1" stroke="#a1a1a1" stroke-width="0.25" letter-spacing="0.2">May 17</text><text x="888.1" y="355.1" text-anchor="middle" font-size="12" fill="#a1a1a1" stroke="#a1a1a1" stroke-width="0.25" letter-spacing="0.2">May 22</text><text x="972.3" y="355.1" text-anchor="middle" font-size="12" fill="#a1a1a1" stroke="#a1a1a1" stroke-width="0.25" letter-spacing="0.2">May 27</text><text x="1056.5" y="355.1" text-anchor="middle" font-size="12" fill="#a1a1a1" stroke="#a1a1a1" stroke-width="0.25" letter-spacing="0.2">Jun 1</text><text x="1123.9" y="355.1" text-anchor="middle" font-size="12" fill="#a1a1a1" stroke="#a1a1a1" stroke-width="0.25" letter-spacing="0.2">Jun 5</text><text x="1191.3" y="355.1" text-anchor="middle" font-size="12" fill="#a1a1a1" stroke="#a1a1a1" stroke-width="0.25" letter-spacing="0.2">Jun 9</text><text x="1275.5" y="355.1" text-anchor="middle" font-size="12" fill="#a1a1a1" stroke="#a1a1a1" stroke-width="0.25" letter-spacing="0.2">Jun 14</text><text x="1359.7" y="355.1" text-anchor="middle" font-size="12" fill="#a1a1a1" stroke="#a1a1a1" stroke-width="0.25" letter-spacing="0.2">Jun 19</text><text x="1443.9" y="355.1" text-anchor="middle" font-size="12" fill="#a1a1a1" stroke="#a1a1a1" stroke-width="0.25" letter-spacing="0.2">Jun 24</text><text x="1532.0" y="355.1" text-anchor="middle" font-size="12" fill="#a1a1a1" stroke="#a1a1a1" stroke-width="0.25" letter-spacing="0.2">Jun 30</text></svg>
</div>
<div class="abs row" style="left:312px;top:704px;height:36px;background:#262626;border-radius:10px;padding:3px;color:#a1a1a1;-webkit-text-stroke:0.45px currentColor;letter-spacing:0.25px;white-space:nowrap"><div class="row" style="height:30px;padding:0 8px;border:1px solid rgba(255,255,255,0.15);background:rgba(255,255,255,0.045);border-radius:8px;color:#fafafa">Outline</div><div class="row" style="height:30px;padding:0 8px 0 10px;gap:7px">Past Performance <span class="row" style="width:20px;height:20px;border-radius:10px;background:rgba(161,161,161,.3);justify-content:center;font-size:12px;color:#e5e5e5">3</span></div><div class="row" style="height:30px;padding:0 7px 0 10px;gap:7px">Key Personnel <span class="row" style="width:20px;height:20px;border-radius:10px;background:rgba(161,161,161,.3);justify-content:center;font-size:12px;color:#e5e5e5">2</span></div><div class="row" style="height:30px;padding:0 11px">Focus Documents</div></div>
<div class="abs row" style="right:32px;top:706px;height:32px;border:1px solid rgba(255,255,255,0.15);background:rgba(255,255,255,0.045);border-radius:8px;padding:0 11px;gap:7px;-webkit-text-stroke:0.45px currentColor;letter-spacing:0.25px;white-space:nowrap"><svg class="ic" style="width:16px;height:16px;" viewBox="0 0 24 24" fill="none" stroke="currentColor" stroke-width="2" stroke-linecap="round" stroke-linejoin="round"><path d="M12 5l0 14"/><path d="M5 12l14 0"/></svg><span>Add Section</span></div>
<div class="abs row" id="cust" style="right:165px;top:706px;height:32px;border:1px solid rgba(255,255,255,0.15);background:rgba(255,255,255,0.045);border-radius:8px;padding:0 10px;gap:6px;-webkit-text-stroke:0.45px currentColor;letter-spacing:0.25px;white-space:nowrap"><svg class="ic" style="width:16px;height:16px;" viewBox="0 0 24 24" fill="none" stroke="currentColor" stroke-width="2" stroke-linecap="round" stroke-linejoin="round"><path d="M4 6a2 2 0 0 1 2 -2h12a2 2 0 0 1 2 2v12a2 2 0 0 1 -2 2h-12a2 2 0 0 1 -2 -2z"/><path d="M12 4l0 16"/></svg><span>Customize Columns</span><svg class="ic" style="width:16px;height:16px;" viewBox="0 0 24 24" fill="none" stroke="currentColor" stroke-width="2" stroke-linecap="round" stroke-linejoin="round"><path d="M6 9l6 6l6 -6"/></svg></div>
<div class="abs" style="left:312px;top:765px;width:1576px;height:400px;border:1px solid rgba(255,255,255,0.10);border-radius:10px 10px 0 0;overflow:hidden;border-bottom:none">
<div class="tr b" style="top:0;height:40px;background:#262626"><div class="cb" style="left:59px;top:11px"></div><div class="t" style="left:89.5px;top:9.2px">Header</div><div class="t" style="left:581px;top:9.2px">Section Type</div><div class="t" style="left:811px;top:9.2px">Status</div><div class="t" style="right:482px;top:9.2px">Target</div><div class="t" style="right:354px;top:9.2px">Limit</div><div class="t" style="left:1235.5px;top:9.2px">Reviewer</div></div>
<div class="tr" style="top:40.0px;height:52.85px"><div class="abs muted" style="left:16px;top:19.325px"><svg class="ic" style="width:13px;height:13px;" viewBox="0 0 24 24" fill="none" stroke="currentColor" stroke-width="2" stroke-linecap="round" stroke-linejoin="round"><circle cx="8.5" cy="4.5" r="1.9" fill="currentColor" stroke="none"/><circle cx="8.5" cy="12" r="1.9" fill="currentColor" stroke="none"/><circle cx="8.5" cy="19.5" r="1.9" fill="currentColor" stroke="none"/><circle cx="15.5" cy="4.5" r="1.9" fill="currentColor" stroke="none"/><circle cx="15.5" cy="12" r="1.9" fill="currentColor" stroke="none"/><circle cx="15.5" cy="19.5" r="1.9" fill="currentColor" stroke="none"/></svg></div><div class="cb" style="left:59px;top:17.325px"></div><div class="t b" style="left:89.5px;top:15.325px;letter-spacing:0.5px">Cover page</div><div class="pill" style="left:580px;top:14.825px">Cover page</div><div class="pill" style="left:810px;top:14.825px"><svg class="ic" style="width:12px;height:12px;" viewBox="0 0 24 24" fill="none" stroke="currentColor" stroke-width="2" stroke-linecap="round" stroke-linejoin="round"><circle cx="12" cy="12" r="7.5" stroke-width="3" stroke-dasharray="2.6 3.3"/></svg>In Process</div><div class="t" style="right:543.5px;top:15.825px">18</div><div class="t" style="right:415.20000000000005px;top:15.825px">5</div><div class="t" style="left:1235.5px;top:15.825px;letter-spacing:0.25px">Eddie Lake</div><div class="abs muted" style="left:1514px;top:17.825px"><svg class="ic" style="width:16px;height:16px;" viewBox="0 0 24 24" fill="none" stroke="currentColor" stroke-width="2" stroke-linecap="round" stroke-linejoin="round"><circle cx="12" cy="5" r="1.7" fill="currentColor" stroke="none"/><circle cx="12" cy="12" r="1.7" fill="currentColor" stroke="none"/><circle cx="12" cy="19" r="1.7" fill="currentColor" stroke="none"/></svg></div></div>
<div class="tr" style="top:92.85px;height:52.85px"><div class="abs muted" style="left:16px;top:19.325px"><svg class="ic" style="width:13px;height:13px;" viewBox="0 0 24 24" fill="none" stroke="currentColor" stroke-width="2" stroke-linecap="round" stroke-linejoin="round"><circle cx="8.5" cy="4.5" r="1.9" fill="currentColor" stroke="none"/><circle cx="8.5" cy="12" r="1.9" fill="currentColor" stroke="none"/><circle cx="8.5" cy="19.5" r="1.9" fill="currentColor" stroke="none"/><circle cx="15.5" cy="4.5" r="1.9" fill="currentColor" stroke="none"/><circle cx="15.5" cy="12" r="1.9" fill="currentColor" stroke="none"/><circle cx="15.5" cy="19.5" r="1.9" fill="currentColor" stroke="none"/></svg></div><div class="cb" style="left:59px;top:17.325px"></div><div class="t b" style="left:89.5px;top:15.325px;letter-spacing:0.5px">Table of contents</div><div class="pill" style="left:580px;top:14.825px">Table of contents</div><div class="pill" style="left:810px;top:14.825px"><span style="color:#05df72"><svg class="ic" style="width:12px;height:12px;" viewBox="0 0 24 24" fill="none" stroke="currentColor" stroke-width="2" stroke-linecap="round" stroke-linejoin="round"><path stroke="none" fill="currentColor" d="M17 3.34a10 10 0 1 1 -14.995 8.984l-.005 -.324l.005 -.324a10 10 0 0 1 14.995 -8.336zm-1.293 5.953a1 1 0 0 0 -1.32 -.083l-.094 .083l-3.293 3.292l-1.293 -1.292l-.094 -.083a1 1 0 0 0 -1.403 1.403l.083 .094l2 2l.094 .083a1 1 0 0 0 1.226 0l.094 -.083l4 -4l.083 -.094a1 1 0 0 0 -.083 -1.32z"/></svg></span>Done</div><div class="t" style="right:543.5px;top:15.825px">29</div><div class="t" style="right:415.20000000000005px;top:15.825px">24</div><div class="t" style="left:1235.5px;top:15.825px;letter-spacing:0.25px">Eddie Lake</div><div class="abs muted" style="left:1514px;top:17.825px"><svg class="ic" style="width:16px;height:16px;" viewBox="0 0 24 24" fill="none" stroke="currentColor" stroke-width="2" stroke-linecap="round" stroke-linejoin="round"><circle cx="12" cy="5" r="1.7" fill="currentColor" stroke="none"/><circle cx="12" cy="12" r="1.7" fill="currentColor" stroke="none"/><circle cx="12" cy="19" r="1.7" fill="currentColor" stroke="none"/></svg></div></div>
<div class="tr" style="top:145.7px;height:52.85px"><div class="abs muted" style="left:16px;top:19.325px"><svg class="ic" style="width:13px;height:13px;" viewBox="0 0 24 24" fill="none" stroke="currentColor" stroke-width="2" stroke-linecap="round" stroke-linejoin="round"><circle cx="8.5" cy="4.5" r="1.9" fill="currentColor" stroke="none"/><circle cx="8.5" cy="12" r="1.9" fill="currentColor" stroke="none"/><circle cx="8.5" cy="19.5" r="1.9" fill="currentColor" stroke="none"/><circle cx="15.5" cy="4.5" r="1.9" fill="currentColor" stroke="none"/><circle cx="15.5" cy="12" r="1.9" fill="currentColor" stroke="none"/><circle cx="15.5" cy="19.5" r="1.9" fill="currentColor" stroke="none"/></svg></div><div class="cb" style="left:59px;top:17.325px"></div><div class="t b" style="left:89.5px;top:15.325px;letter-spacing:0.5px">Executive summary</div><div class="pill" style="left:580px;top:14.825px">Narrative</div><div class="pill" style="left:810px;top:14.825px"><span style="color:#05df72"><svg class="ic" style="width:12px;height:12px;" viewBox="0 0 24 24" fill="none" stroke="currentColor" stroke-width="2" stroke-linecap="round" stroke-linejoin="round"><path stroke="none" fill="currentColor" d="M17 3.34a10 10 0 1 1 -14.995 8.984l-.005 -.324l.005 -.324a10 10 0 0 1 14.995 -8.336zm-1.293 5.953a1 1 0 0 0 -1.32 -.083l-.094 .083l-3.293 3.292l-1.293 -1.292l-.094 -.083a1 1 0 0 0 -1.403 1.403l.083 .094l2 2l.094 .083a1 1 0 0 0 1.226 0l.094 -.083l4 -4l.083 -.094a1 1 0 0 0 -.083 -1.32z"/></svg></span>Done</div><div class="t" style="right:543.5px;top:15.825px">10</div><div class="t" style="right:415.20000000000005px;top:15.825px">13</div><div class="t" style="left:1235.5px;top:15.825px;letter-spacing:0.25px">Eddie Lake</div><div class="abs muted" style="left:1514px;top:17.825px"><svg class="ic" style="width:16px;height:16px;" viewBox="0 0 24 24" fill="none" stroke="currentColor" stroke-width="2" stroke-linecap="round" stroke-linejoin="round"><circle cx="12" cy="5" r="1.7" fill="currentColor" stroke="none"/><circle cx="12" cy="12" r="1.7" fill="currentColor" stroke="none"/><circle cx="12" cy="19" r="1.7" fill="currentColor" stroke="none"/></svg></div></div>
<div class="tr" style="top:198.55px;height:52.85px"><div class="abs muted" style="left:16px;top:19.325px"><svg class="ic" style="width:13px;height:13px;" viewBox="0 0 24 24" fill="none" stroke="currentColor" stroke-width="2" stroke-linecap="round" stroke-linejoin="round"><circle cx="8.5" cy="4.5" r="1.9" fill="currentColor" stroke="none"/><circle cx="8.5" cy="12" r="1.9" fill="currentColor" stroke="none"/><circle cx="8.5" cy="19.5" r="1.9" fill="currentColor" stroke="none"/><circle cx="15.5" cy="4.5" r="1.9" fill="currentColor" stroke="none"/><circle cx="15.5" cy="12" r="1.9" fill="currentColor" stroke="none"/><circle cx="15.5" cy="19.5" r="1.9" fill="currentColor" stroke="none"/></svg></div><div class="cb" style="left:59px;top:17.325px"></div><div class="t b" style="left:89.5px;top:15.325px;letter-spacing:0.5px">Technical approach</div><div class="pill" style="left:580px;top:14.825px">Narrative</div><div class="pill" style="left:810px;top:14.825px"><span style="color:#05df72"><svg class="ic" style="width:12px;height:12px;" viewBox="0 0 24 24" fill="none" stroke="currentColor" stroke-width="2" stroke-linecap="round" stroke-linejoin="round"><path stroke="none" fill="currentColor" d="M17 3.34a10 10 0 1 1 -14.995 8.984l-.005 -.324l.005 -.324a10 10 0 0 1 14.995 -8.336zm-1.293 5.953a1 1 0 0 0 -1.32 -.083l-.094 .083l-3.293 3.292l-1.293 -1.292l-.094 -.083a1 1 0 0 0 -1.403 1.403l.083 .094l2 2l.094 .083a1 1 0 0 0 1.226 0l.094 -.083l4 -4l.083 -.094a1 1 0 0 0 -.083 -1.32z"/></svg></span>Done</div><div class="t" style="right:543.5px;top:15.825px">27</div><div class="t" style="right:415.20000000000005px;top:15.825px">23</div><div class="t" style="left:1235.5px;top:15.825px;letter-spacing:0.25px">Jamik Tashpulatov</div><div class="abs muted" style="left:1514px;top:17.825px"><svg class="ic" style="width:16px;height:16px;" viewBox="0 0 24 24" fill="none" stroke="currentColor" stroke-width="2" stroke-linecap="round" stroke-linejoin="round"><circle cx="12" cy="5" r="1.7" fill="currentColor" stroke="none"/><circle cx="12" cy="12" r="1.7" fill="currentColor" stroke="none"/><circle cx="12" cy="19" r="1.7" fill="currentColor" stroke="none"/></svg></div></div>
<div class="tr" style="top:251.4px;height:52.85px"><div class="abs muted" style="left:16px;top:19.325px"><svg class="ic" style="width:13px;height:13px;" viewBox="0 0 24 24" fill="none" stroke="currentColor" stroke-width="2" stroke-linecap="round" stroke-linejoin="round"><circle cx="8.5" cy="4.5" r="1.9" fill="currentColor" stroke="none"/><circle cx="8.5" cy="12" r="1.9" fill="currentColor" stroke="none"/><circle cx="8.5" cy="19.5" r="1.9" fill="currentColor" stroke="none"/><circle cx="15.5" cy="4.5" r="1.9" fill="currentColor" stroke="none"/><circle cx="15.5" cy="12" r="1.9" fill="currentColor" stroke="none"/><circle cx="15.5" cy="19.5" r="1.9" fill="currentColor" stroke="none"/></svg></div><div class="cb" style="left:59px;top:17.325px"></div><div class="t b" style="left:89.5px;top:15.325px;letter-spacing:0.5px">Design</div><div class="pill" style="left:580px;top:14.825px">Narrative</div><div class="pill" style="left:810px;top:14.825px"><svg class="ic" style="width:12px;height:12px;" viewBox="0 0 24 24" fill="none" stroke="currentColor" stroke-width="2" stroke-linecap="round" stroke-linejoin="round"><circle cx="12" cy="12" r="7.5" stroke-width="3" stroke-dasharray="2.6 3.3"/></svg>In Process</div><div class="t" style="right:543.5px;top:15.825px">2</div><div class="t" style="right:415.20000000000005px;top:15.825px">16</div><div class="t" style="left:1235.5px;top:15.825px;letter-spacing:0.25px">Jamik Tashpulatov</div><div class="abs muted" style="left:1514px;top:17.825px"><svg class="ic" style="width:16px;height:16px;" viewBox="0 0 24 24" fill="none" stroke="currentColor" stroke-width="2" stroke-linecap="round" stroke-linejoin="round"><circle cx="12" cy="5" r="1.7" fill="currentColor" stroke="none"/><circle cx="12" cy="12" r="1.7" fill="currentColor" stroke="none"/><circle cx="12" cy="19" r="1.7" fill="currentColor" stroke="none"/></svg></div></div>
<div class="tr" style="top:304.25px;height:52.85px"><div class="abs muted" style="left:16px;top:19.325px"><svg class="ic" style="width:13px;height:13px;" viewBox="0 0 24 24" fill="none" stroke="currentColor" stroke-width="2" stroke-linecap="round" stroke-linejoin="round"><circle cx="8.5" cy="4.5" r="1.9" fill="currentColor" stroke="none"/><circle cx="8.5" cy="12" r="1.9" fill="currentColor" stroke="none"/><circle cx="8.5" cy="19.5" r="1.9" fill="currentColor" stroke="none"/><circle cx="15.5" cy="4.5" r="1.9" fill="currentColor" stroke="none"/><circle cx="15.5" cy="12" r="1.9" fill="currentColor" stroke="none"/><circle cx="15.5" cy="19.5" r="1.9" fill="currentColor" stroke="none"/></svg></div><div class="cb" style="left:59px;top:17.325px"></div><div class="t b" style="left:89.5px;top:15.325px;letter-spacing:0.5px">Capabilities</div><div class="pill" style="left:580px;top:14.825px">Narrative</div><div class="pill" style="left:810px;top:14.825px"><svg class="ic" style="width:12px;height:12px;" viewBox="0 0 24 24" fill="none" stroke="currentColor" stroke-width="2" stroke-linecap="round" stroke-linejoin="round"><circle cx="12" cy="12" r="7.5" stroke-width="3" stroke-dasharray="2.6 3.3"/></svg>In Process</div><div class="t" style="right:543.5px;top:15.825px">20</div><div class="t" style="right:415.20000000000005px;top:15.825px">8</div><div class="t" style="left:1235.5px;top:15.825px;letter-spacing:0.25px">Jamik Tashpulatov</div><div class="abs muted" style="left:1514px;top:17.825px"><svg class="ic" style="width:16px;height:16px;" viewBox="0 0 24 24" fill="none" stroke="currentColor" stroke-width="2" stroke-linecap="round" stroke-linejoin="round"><circle cx="12" cy="5" r="1.7" fill="currentColor" stroke="none"/><circle cx="12" cy="12" r="1.7" fill="currentColor" stroke="none"/><circle cx="12" cy="19" r="1.7" fill="currentColor" stroke="none"/></svg></div></div>
</div>
</div></div>
<div class="abs" style="left:0;top:0;width:896px;height:1px;background:#1b1f28"></div>
<div class="abs" style="left:0;top:0;width:4px;height:1px;background:#8a8d93"></div>
<div class="abs" style="left:0;top:504.6px;width:896px;height:4px;background:#05070d"></div>
<div class="abs" style="left:0;top:504.6px;width:896px;height:1px;background:#1c212b"></div>
<div class="abs" style="left:0;top:504.6px;width:5px;height:1px;background:#9a9ca1"></div>
<div class="abs" style="left:891px;top:504.8px;width:5px;height:1.2px;background:#9a9ca1"></div>
<div class="abs" style="left:891px;top:0;width:5px;height:1px;background:#8a8d93"></div>
</body></html>
